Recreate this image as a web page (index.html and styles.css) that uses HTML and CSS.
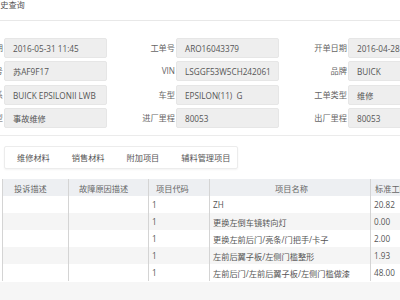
FILE: index.html
```html
<!DOCTYPE html>
<html lang="zh-CN">
<head>
    <meta charset="UTF-8">
    <meta name="viewport" content="width=device-width, initial-scale=1.0">
    <title>历史查询</title>
    <link rel="stylesheet" href="styles.css">
</head>
<body>
    <div class="page">
        <div class="title">历史查询</div>

        <div class="form">
            <label>开单日期</label><div class="field">2016-05-31 11:45</div>
            <label>工单号</label><div class="field">ARO16043379</div>
            <label>开单日期</label><div class="field">2016-04-28 09:30</div>

            <label>车牌号</label><div class="field">苏AF9F17</div>
            <label>VIN</label><div class="field">LSGGF53W5CH242061</div>
            <label>品牌</label><div class="field">BUICK</div>

            <label>车系</label><div class="field">BUICK EPSILONII LWB</div>
            <label>车型</label><div class="field">EPSILON(11)&nbsp;&nbsp;G</div>
            <label>工单类型</label><div class="field">维修</div>

            <label>维修类型</label><div class="field">事故维修</div>
            <label>进厂里程</label><div class="field">80053</div>
            <label>出厂里程</label><div class="field">80053</div>
        </div>

        <div class="divider"></div>

        <div class="tabs">
            <span class="tab">维修材料</span>
            <span class="tab">销售材料</span>
            <span class="tab">附加项目</span>
            <span class="tab">辅料管理项目</span>
        </div>

        <table class="grid">
            <thead>
                <tr>
                    <th class="c1">投诉描述</th>
                    <th class="c2">故障原因描述</th>
                    <th class="c3">项目代码</th>
                    <th class="c4">项目名称</th>
                    <th class="c5">标准工时</th>
                </tr>
            </thead>
            <tbody>
                <tr><td></td><td></td><td>1</td><td>ZH</td><td>20.82</td></tr>
                <tr><td></td><td></td><td>1</td><td>更换左倒车镜转向灯</td><td>0.00</td></tr>
                <tr><td></td><td></td><td>1</td><td>更换左前后门/亮条/门把手/卡子</td><td>2.00</td></tr>
                <tr><td></td><td></td><td>1</td><td>左前后翼子板/左侧门槛整形</td><td>1.93</td></tr>
                <tr><td></td><td></td><td>1</td><td>左前后门/左前后翼子板/左侧门槛做漆</td><td>48.00</td></tr>
            </tbody>
        </table>
    </div>
    <div class="rest"></div>
</body>
</html>
```

FILE: styles.css
```css
html {
    background-color: #f6f6f6;
}

body {
    margin: 0;
    overflow: hidden;
    font-family: "Open Sans", "Noto Sans CJK SC", sans-serif;
    font-size: 8.2px;
    color: #555;
}

.page {
    background-color: white;
    height: 282px;
    overflow: hidden;
}

.title {
    height: 20px;
    line-height: 10px;
    margin-left: -8px;
    border-bottom: 1px solid #e8e8e8;
    color: #555;
}

.form {
    display: grid;
    grid-template-columns: 67px 103px 67px 103px 67px 103px;
    column-gap: 1px;
    row-gap: 3.4px;
    margin: 17px 0 0 -64px;
}

.form label {
    text-align: right;
    line-height: 20px;
    color: #666;
    white-space: nowrap;
}

.field {
    height: 20px;
    line-height: 20px;
    box-sizing: border-box;
    padding-left: 8px;
    background-color: #eeeeee;
    border: 1px solid #e6e6e6;
    border-radius: 2px;
    white-space: nowrap;
    overflow: hidden;
}

.divider {
    margin-top: 7px;
    border-top: 1px solid #ebebeb;
}

.tabs {
    display: flex;
    width: 234px;
    height: 23px;
    box-sizing: border-box;
    margin: 10px 0 0 4px;
    padding-left: 1px;
    border: 1px solid #ececec;
    border-radius: 2px;
    box-shadow: 0 1px 2px rgba(0, 0, 0, 0.05);
}

.tab {
    padding: 0 11px;
    line-height: 21px;
    color: #555;
    white-space: nowrap;
}

.grid {
    margin: 10px 0 0 2px;
    border-collapse: collapse;
    table-layout: fixed;
    width: 480px;
}

.grid th,
.grid td {
    height: 17px;
    padding: 0 0 0 3px;
    border-left: 1px solid #d4d4d4;
    text-align: left;
    white-space: nowrap;
    overflow: hidden;
    font-weight: normal;
}

.grid th {
    background-color: #edeff2;
    color: #666;
}

.grid tbody tr:nth-child(even) td {
    background-color: #f5f5f5;
}

.grid .c1 { width: 66px; padding-left: 11px; box-sizing: border-box; }
.grid .c2 { width: 80px; padding-left: 10px; box-sizing: border-box; }
.grid .c3 { width: 61px; padding-left: 7px; box-sizing: border-box; }
.grid .c4 { width: 161px; text-align: center; box-sizing: border-box; }
.grid .c5 { padding-left: 4px; }
```
